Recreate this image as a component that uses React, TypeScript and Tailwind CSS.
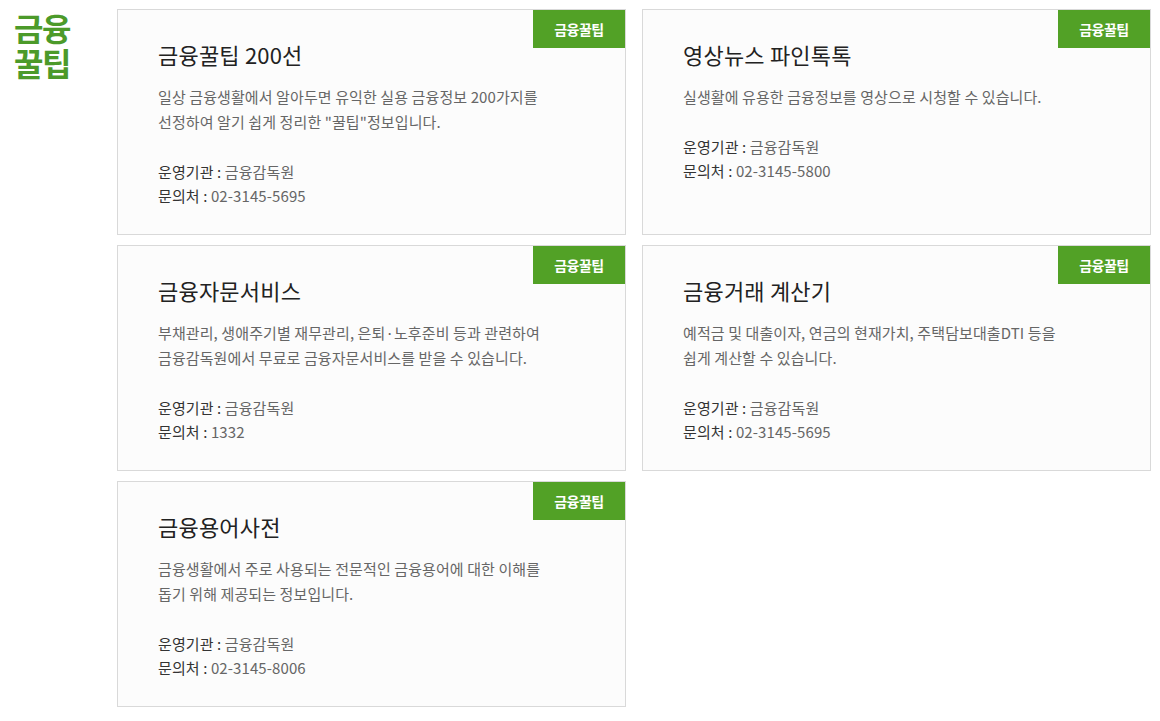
import React from "react";

type Card = {
  title: string;
  desc: string[];
  contact: string;
};

const cards: Card[] = [
  {
    title: "금융꿀팁 200선",
    desc: [
      "일상 금융생활에서 알아두면 유익한 실용 금융정보 200가지를",
      '선정하여 알기 쉽게 정리한 "꿀팁"정보입니다.',
    ],
    contact: "02-3145-5695",
  },
  {
    title: "영상뉴스 파인톡톡",
    desc: ["실생활에 유용한 금융정보를 영상으로 시청할 수 있습니다."],
    contact: "02-3145-5800",
  },
  {
    title: "금융자문서비스",
    desc: [
      "부채관리, 생애주기별 재무관리, 은퇴·노후준비 등과 관련하여",
      "금융감독원에서 무료로 금융자문서비스를 받을 수 있습니다.",
    ],
    contact: "1332",
  },
  {
    title: "금융거래 계산기",
    desc: [
      "예적금 및 대출이자, 연금의 현재가치, 주택담보대출DTI 등을",
      "쉽게 계산할 수 있습니다.",
    ],
    contact: "02-3145-5695",
  },
  {
    title: "금융용어사전",
    desc: [
      "금융생활에서 주로 사용되는 전문적인 금융용어에 대한 이해를",
      "돕기 위해 제공되는 정보입니다.",
    ],
    contact: "02-3145-8006",
  },
];

const font = {
  fontFamily: '"Noto Sans CJK KR", "Noto Sans", sans-serif',
};

function InfoCard({ card }: { card: Card }) {
  return (
    <div className="relative border border-[#d9d9d9] bg-[#fcfcfc] pl-[40px] pr-[20px] pt-[29px] pb-[26px]">
      <div className="absolute right-0 top-0 flex h-[38px] w-[92px] items-center justify-center bg-[#52a126] text-[14px] font-bold tracking-[-0.5px] text-white">
        금융꿀팁
      </div>
      <h3 className="text-[22px] leading-[30px] tracking-[0.2px] text-[#222]">
        {card.title}
      </h3>
      <p className="mt-[15px] text-[15px] leading-[25px] tracking-[0.1px] text-[#666]">
        {card.desc.map((l, i) => (
          <React.Fragment key={i}>
            {l}
            {i < card.desc.length - 1 && <br />}
          </React.Fragment>
        ))}
      </p>
      <div className="mt-[26px] text-[15px] leading-[24px] tracking-[0.1px]">
        <div>
          <span className="text-[#333]">운영기관 : </span>
          <span className="text-[#666]">금융감독원</span>
        </div>
        <div>
          <span className="text-[#333]">문의처 : </span>
          <span className="text-[#666]">{card.contact}</span>
        </div>
      </div>
    </div>
  );
}

export default function App() {
  return (
    <div style={font} className="flex min-h-[721px] w-[1160px] bg-white pt-[9px]">
      <div className="w-[117px] shrink-0 pl-[14px] pt-[1px]">
        <h2 className="text-[32px] font-bold leading-[35px] tracking-[-1.5px] text-[#4c9a2a]">
          <div>금융</div>
          <div>꿀팁</div>
        </h2>
      </div>
      <div className="grid w-[1034px] grid-cols-2 gap-x-[16px] gap-y-[10px] self-start">
        {cards.map((c, i) => (
          <InfoCard key={i} card={c} />
        ))}
      </div>
    </div>
  );
}
